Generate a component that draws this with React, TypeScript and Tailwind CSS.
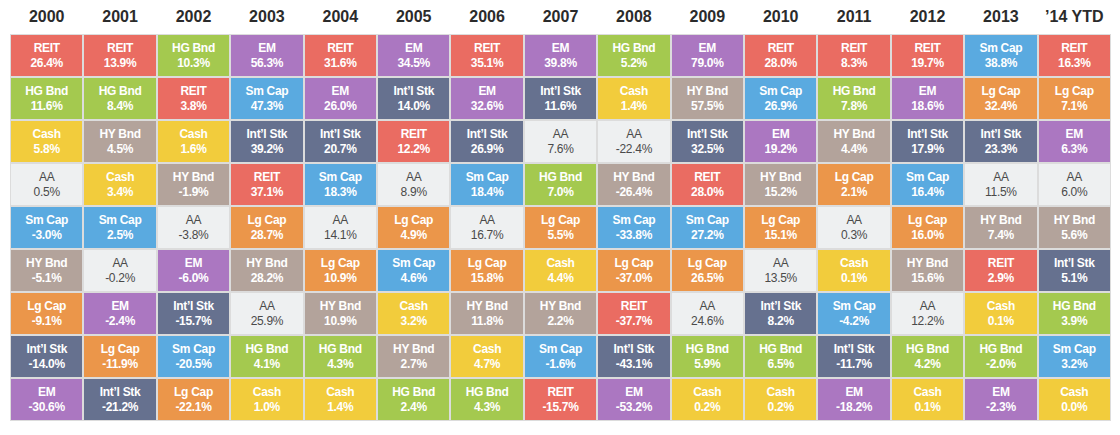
import React from "react";

type Cls = "REIT" | "HG Bnd" | "EM" | "Sm Cap" | "Cash" | "HY Bnd" | "Int’l Stk" | "AA" | "Lg Cap";

const bg: Record<Cls, string> = {
  REIT: "bg-[#ea6c62] text-white",
  "HG Bnd": "bg-[#a4c94f] text-white",
  EM: "bg-[#ab77c1] text-white",
  "Sm Cap": "bg-[#5aaae0] text-white",
  Cash: "bg-[#f2cc3c] text-white",
  "HY Bnd": "bg-[#b3a39b] text-white",
  "Int’l Stk": "bg-[#66718f] text-white",
  AA: "bg-[#eef0f1] text-[#4a4a4a] font-normal",
  "Lg Cap": "bg-[#eb964a] text-white",
};

const R: Cls = "REIT", H: Cls = "HG Bnd", E: Cls = "EM", S: Cls = "Sm Cap", C: Cls = "Cash",
  Y: Cls = "HY Bnd", I: Cls = "Int’l Stk", A: Cls = "AA", L: Cls = "Lg Cap";

const data: { year: string; cells: [Cls, string][] }[] = [
  { year: "2000", cells: [[R, "26.4"], [H, "11.6"], [C, "5.8"], [A, "0.5"], [S, "-3.0"], [Y, "-5.1"], [L, "-9.1"], [I, "-14.0"], [E, "-30.6"]] },
  { year: "2001", cells: [[R, "13.9"], [H, "8.4"], [Y, "4.5"], [C, "3.4"], [S, "2.5"], [A, "-0.2"], [E, "-2.4"], [L, "-11.9"], [I, "-21.2"]] },
  { year: "2002", cells: [[H, "10.3"], [R, "3.8"], [C, "1.6"], [Y, "-1.9"], [A, "-3.8"], [E, "-6.0"], [I, "-15.7"], [S, "-20.5"], [L, "-22.1"]] },
  { year: "2003", cells: [[E, "56.3"], [S, "47.3"], [I, "39.2"], [R, "37.1"], [L, "28.7"], [Y, "28.2"], [A, "25.9"], [H, "4.1"], [C, "1.0"]] },
  { year: "2004", cells: [[R, "31.6"], [E, "26.0"], [I, "20.7"], [S, "18.3"], [A, "14.1"], [L, "10.9"], [Y, "10.9"], [H, "4.3"], [C, "1.4"]] },
  { year: "2005", cells: [[E, "34.5"], [I, "14.0"], [R, "12.2"], [A, "8.9"], [L, "4.9"], [S, "4.6"], [C, "3.2"], [Y, "2.7"], [H, "2.4"]] },
  { year: "2006", cells: [[R, "35.1"], [E, "32.6"], [I, "26.9"], [S, "18.4"], [A, "16.7"], [L, "15.8"], [Y, "11.8"], [C, "4.7"], [H, "4.3"]] },
  { year: "2007", cells: [[E, "39.8"], [I, "11.6"], [A, "7.6"], [H, "7.0"], [L, "5.5"], [C, "4.4"], [Y, "2.2"], [S, "-1.6"], [R, "-15.7"]] },
  { year: "2008", cells: [[H, "5.2"], [C, "1.4"], [A, "-22.4"], [Y, "-26.4"], [S, "-33.8"], [L, "-37.0"], [R, "-37.7"], [I, "-43.1"], [E, "-53.2"]] },
  { year: "2009", cells: [[E, "79.0"], [Y, "57.5"], [I, "32.5"], [R, "28.0"], [S, "27.2"], [L, "26.5"], [A, "24.6"], [H, "5.9"], [C, "0.2"]] },
  { year: "2010", cells: [[R, "28.0"], [S, "26.9"], [E, "19.2"], [Y, "15.2"], [L, "15.1"], [A, "13.5"], [I, "8.2"], [H, "6.5"], [C, "0.2"]] },
  { year: "2011", cells: [[R, "8.3"], [H, "7.8"], [Y, "4.4"], [L, "2.1"], [A, "0.3"], [C, "0.1"], [S, "-4.2"], [I, "-11.7"], [E, "-18.2"]] },
  { year: "2012", cells: [[R, "19.7"], [E, "18.6"], [I, "17.9"], [S, "16.4"], [L, "16.0"], [Y, "15.6"], [A, "12.2"], [H, "4.2"], [C, "0.1"]] },
  { year: "2013", cells: [[S, "38.8"], [L, "32.4"], [I, "23.3"], [A, "11.5"], [Y, "7.4"], [R, "2.9"], [C, "0.1"], [H, "-2.0"], [E, "-2.3"]] },
  { year: "’14 YTD", cells: [[R, "16.3"], [L, "7.1"], [E, "6.3"], [A, "6.0"], [Y, "5.6"], [I, "5.1"], [H, "3.9"], [S, "3.2"], [C, "0.0"]] },
];

export default function App() {
  return (
    <div
      className="w-[1120px] h-[435px] bg-white pl-[10px]"
      style={{ fontFamily: '"Liberation Sans", Arial, sans-serif' }}
    >
      <div className="grid grid-cols-15 w-[1101px]">
        {data.map((col) => (
          <div key={col.year} className="flex flex-col">
            <div className="h-[34px] flex items-center justify-center text-[16px] font-bold text-[#2b2b2b]">
              {col.year}
            </div>
            {col.cells.map(([c, v], i) => (
              <div
                key={i}
                className={`h-[43px] border border-[#dcdcdc] flex flex-col items-center justify-center text-[12px] leading-[15px] font-bold tracking-[-0.3px] ${bg[c]}`}
              >
                <span>{c}</span>
                <span>{v}%</span>
              </div>
            ))}
          </div>
        ))}
      </div>
    </div>
  );
}
